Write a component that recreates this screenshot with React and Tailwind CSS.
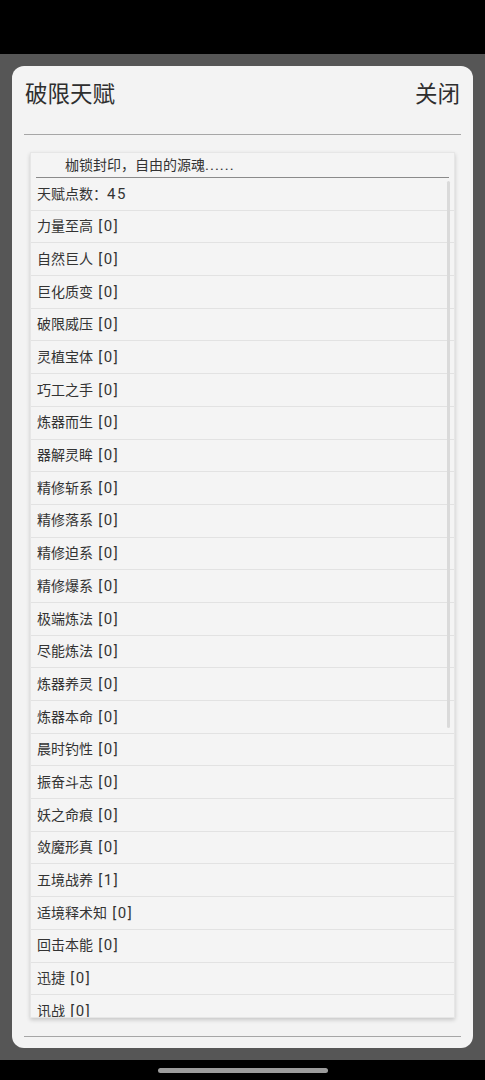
import React from "react";

const talents = [
  "力量至高 [0]",
  "自然巨人 [0]",
  "巨化质变 [0]",
  "破限威压 [0]",
  "灵植宝体 [0]",
  "巧工之手 [0]",
  "炼器而生 [0]",
  "器解灵眸 [0]",
  "精修斩系 [0]",
  "精修落系 [0]",
  "精修迫系 [0]",
  "精修爆系 [0]",
  "极端炼法 [0]",
  "尽能炼法 [0]",
  "炼器养灵 [0]",
  "炼器本命 [0]",
  "晨时钓性 [0]",
  "振奋斗志 [0]",
  "妖之命痕 [0]",
  "敛魔形真 [0]",
  "五境战养 [1]",
  "适境释术知 [0]",
  "回击本能 [0]",
  "迅捷 [0]",
  "讯战 [0]",
];

const font = { fontFamily: 'Roboto, "Noto Sans CJK SC", sans-serif' };

// latin runs render a bit larger/wider than the CJK glyphs on the device
const Txt = ({ s, latin }) => (
  <span className="whitespace-pre">
    {s.split(/([ -~]+)/).map((p, i) =>
      /^[ -~]+$/.test(p) ? (
        <span key={i} className={latin}>
          {p}
        </span>
      ) : (
        p
      )
    )}
  </span>
);

const Row = ({ text }) => (
  <div className="h-[32.7px] shrink-0 flex items-center pl-[6px] border-b border-[#e2e2e2] text-[14px] text-[#333]">
    <Txt s={text} latin="text-[15px] tracking-[1.5px]" />
  </div>
);

const App = () => {
  return (
    <div className="w-[485px] h-[1080px] bg-black flex flex-col overflow-hidden" style={font}>
      {/* status bar */}
      <div className="h-[54px] shrink-0 bg-black" />

      {/* dimmed backdrop */}
      <div className="flex-1 bg-[#565656] px-[12px] pt-[12px] pb-[12px] flex flex-col">
        <div className="flex-1 bg-[#f3f3f3] rounded-[12px] flex flex-col">
          {/* title */}
          <div className="h-[68px] shrink-0 flex justify-between items-start pt-[14px] pl-[13px] pr-[13px]">
            <span className="text-[22.5px] leading-[28px] text-[#2e2e2e]">破限天赋</span>
            <span className="text-[22.5px] leading-[28px] text-[#2e2e2e]">关闭</span>
          </div>
          <div className="h-px mx-[12px] bg-[#a6a6a6]" />

          {/* talent list */}
          <div className="relative mt-[17px] mx-[18px] h-[866px] bg-[#f4f4f4] border border-[#e6e6e6] shadow-[0_2px_4px_rgba(0,0,0,0.18)] overflow-hidden">
            <div className="h-[25px] flex items-center pl-[29px] border-b border-[#8a8a8a] mx-[5px] text-[14px] text-[#333]">
              <Txt s="枷锁封印，自由的源魂......" latin="text-[15px] tracking-[1px]" />
            </div>
            <div className="flex flex-col">
              <Row text="天赋点数：45" />
              {talents.map((t) => (
                <Row key={t} text={t} />
              ))}
            </div>
            {/* scrollbar */}
            <div className="absolute right-[4px] top-[28px] w-[3px] h-[547px] bg-[#dadada] rounded-full" />
          </div>

          <div className="h-px mx-[12px] mt-[18px] bg-[#a6a6a6]" />
        </div>
      </div>

      {/* nav bar */}
      <div className="h-[20px] shrink-0 bg-black flex items-center justify-center">
        <div className="w-[170px] h-[5px] rounded-full bg-[#9c9c9c]" />
      </div>
    </div>
  );
};

export default App;
